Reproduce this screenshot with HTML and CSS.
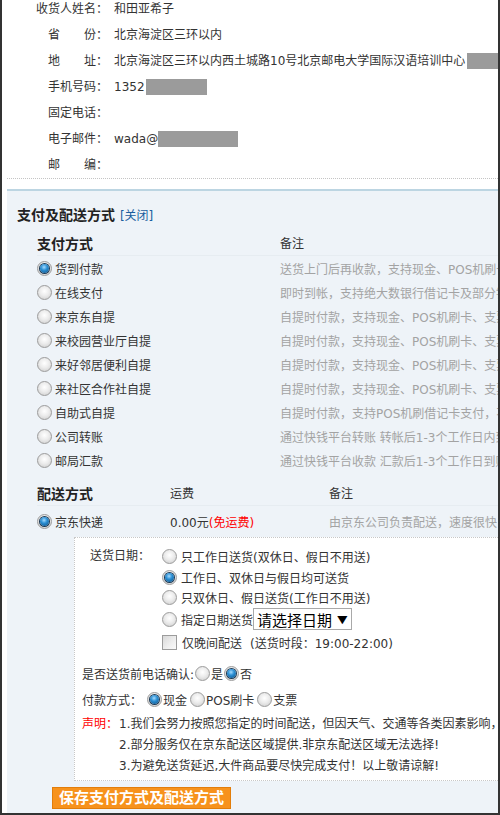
FILE: index.html
```html
<!DOCTYPE html>
<html lang="zh-CN">
<head>
<meta charset="utf-8">
<title>支付及配送方式</title>
<link rel="stylesheet" href="styles.css">
</head>
<body>
<div class="page">
  <div class="info">
    <div class="row"><span class="lbl">收货人姓名：</span><span class="val">和田亚希子</span></div>
    <div class="row"><span class="lbl"><span class="j">省份</span>：</span><span class="val">北京海淀区三环以内</span></div>
    <div class="row"><span class="lbl"><span class="j">地址</span>：</span><span class="val">北京海淀区三环以内西土城路10号北京邮电大学国际汉语培训中心<span class="mask mask-addr"></span></span></div>
    <div class="row"><span class="lbl">手机号码：</span><span class="val">1352<span class="mask mask-phone"></span></span></div>
    <div class="row"><span class="lbl">固定电话：</span><span class="val"></span></div>
    <div class="row"><span class="lbl">电子邮件：</span><span class="val">wada@<span class="mask mask-mail"></span></span></div>
    <div class="row"><span class="lbl"><span class="j">邮编</span>：</span><span class="val"></span></div>
  </div>
  <div class="sep"></div>
  <div class="panel">
    <div class="title">支付及配送方式 <span class="link">[关闭]</span></div>

    <div class="tbl pay">
      <div class="thead"><span class="c1 th">支付方式</span><span class="c2">备注</span></div>
      <div class="tr"><span class="c1"><span class="radio on"></span>货到付款</span><span class="c2 note">送货上门后再收款，支持现金、POS机刷卡、支票支付</span></div>
      <div class="tr"><span class="c1"><span class="radio"></span>在线支付</span><span class="c2 note">即时到帐，支持绝大数银行借记卡及部分银行信用卡</span></div>
      <div class="tr"><span class="c1"><span class="radio"></span>来京东自提</span><span class="c2 note">自提时付款，支持现金、POS机刷卡、支票支付</span></div>
      <div class="tr"><span class="c1"><span class="radio"></span>来校园营业厅自提</span><span class="c2 note">自提时付款，支持现金、POS机刷卡、支票支付</span></div>
      <div class="tr"><span class="c1"><span class="radio"></span>来好邻居便利自提</span><span class="c2 note">自提时付款，支持现金、POS机刷卡、支票支付</span></div>
      <div class="tr"><span class="c1"><span class="radio"></span>来社区合作社自提</span><span class="c2 note">自提时付款，支持现金、POS机刷卡、支票支付</span></div>
      <div class="tr"><span class="c1"><span class="radio"></span>自助式自提</span><span class="c2 note">自提时付款，支持POS机刷借记卡支付，不支持现金</span></div>
      <div class="tr"><span class="c1"><span class="radio"></span>公司转账</span><span class="c2 note">通过快钱平台转账 转帐后1-3个工作日内到账</span></div>
      <div class="tr"><span class="c1"><span class="radio"></span>邮局汇款</span><span class="c2 note">通过快钱平台收款 汇款后1-3个工作日到账</span></div>
    </div>

    <div class="tbl ship">
      <div class="thead"><span class="s1 th">配送方式</span><span class="s2">运费</span><span class="s3">备注</span></div>
      <div class="tr tr-ship"><span class="s1"><span class="radio on"></span>京东快递</span><span class="s2">0.00元<span class="red">(免运费)</span></span><span class="s3 note">由京东公司负责配送，速度很快，还接受上门刷卡付款服务</span></div>
    </div>

    <div class="box">
      <div class="date">
        <span class="date-lbl">送货日期：</span>
        <div class="opts">
          <div class="opt o1"><span class="radio"></span>只工作日送货(双休日、假日不用送)</div>
          <div class="opt o2"><span class="radio on"></span>工作日、双休日与假日均可送货</div>
          <div class="opt o3"><span class="radio"></span>只双休日、假日送货(工作日不用送)</div>
          <div class="opt o4"><span class="radio"></span>指定日期送货<span class="select">请选择日期<span class="arrow">▼</span></span></div>
        </div>
      </div>
      <div class="night"><span class="check"></span>仅晚间配送<span class="night-time">(送货时段：19:00-22:00)</span></div>
      <div class="line confirm">是否送货前电话确认:<span class="radio r-yes"></span>是<span class="radio on r-no"></span>否</div>
      <div class="line paytype">付款方式：<span class="radio on r-cash"></span>现金 <span class="radio r-pos"></span>POS刷卡 <span class="radio r-check"></span>支票</div>
      <div class="notice">
        <span class="notice-lbl">声明：</span>
        <div class="notice-txt">
          <div>1.我们会努力按照您指定的时间配送，但因天气、交通等各类因素影响，您的订单有可能会有延误现象！</div>
          <div>2.部分服务仅在京东配送区域提供.非京东配送区域无法选择!</div>
          <div>3.为避免送货延迟,大件商品要尽快完成支付！以上敬请谅解!</div>
        </div>
      </div>
    </div>

    <div class="btn">保存支付方式及配送方式</div>
  </div>
</div>
</body>
</html>
```

FILE: styles.css
```css
* { box-sizing: border-box; }
html, body { margin: 0; padding: 0; background: #fff; }
body {
  font-family: "DejaVu Sans", "Noto Sans CJK SC", sans-serif;
  font-size: 12px;
  color: #333;
}
.page {
  width: 500px;
  height: 815px;
  border-left: 2px solid #333;
  border-right: 2px solid #333;
  border-bottom: 2px solid #333;
  overflow: hidden;
  display: flex;
  flex-direction: column;
  background: #fff;
}

/* top info */
.info { margin-top: -4px; }
.row { display: flex; height: 26px; line-height: 26px; white-space: nowrap; }
.lbl { width: 106px; flex-shrink: 0; text-align: right; }
.j { display: inline-block; width: 48px; text-align: justify; text-align-last: justify; }
.val { margin-left: 6px; display: flex; align-items: center; }
.mask { display: inline-block; height: 16px; background: #9b9b9b; }
.mask-addr { width: 40px; margin-left: 2px; }
.mask-phone { width: 61px; margin-left: 1px; }
.mask-mail { width: 80px; }

.sep {
  margin-left: 5px;
  height: 11px;
  border-top: 1px dotted #c4c4c4;
}

/* panel */
.panel {
  flex: 1;
  margin-left: 5px;
  border-top: 2px solid #bcd5e2;
  background: #eef3f8;
  padding: 14px 0 0 10px;
  white-space: nowrap;
}
.title { height: 20px; line-height: 20px; font-size: 14px; font-weight: bold; color: #222; }
.link { font-size: 12px; font-weight: normal; color: #1a5e9e; }

.tbl { margin-left: 20px; }
.pay { margin-top: 5px; }
.ship { margin-top: 8px; }
.thead {
  display: flex;
  align-items: center;
  height: 26px;
  border-bottom: 1px solid #e6ecf1;
}
.th { font-size: 14px; font-weight: bold; color: #222; }
.tr { display: flex; align-items: center; height: 24px; }
.tr-ship { height: 31px; }
.c1 { width: 243px; flex-shrink: 0; display: flex; align-items: center; }
.c2 { flex-shrink: 0; }
.s1 { width: 133px; flex-shrink: 0; display: flex; align-items: center; }
.s2 { width: 159px; flex-shrink: 0; }
.s3 { flex-shrink: 0; }
.note { color: #a3a3a3; }
.red { color: #f00; }

/* radio & checkbox */
.radio {
  display: inline-block;
  position: relative;
  width: 15px;
  height: 15px;
  border-radius: 50%;
  border: 1px solid #9c9c9c;
  background: radial-gradient(circle at 50% 40%, #ffffff 0%, #ececec 45%, #c9c9c9 100%);
  flex-shrink: 0;
  vertical-align: middle;
  margin-right: 3px;
}
.radio.on::after {
  content: "";
  position: absolute;
  left: 2px;
  top: 2px;
  width: 9px;
  height: 9px;
  border-radius: 50%;
  background: radial-gradient(circle at 45% 35%, #a6dcff 0%, #2b8fd4 40%, #0b4c80 100%);
  box-shadow: 0 0 0 1px #1d3a55;
}
.check {
  display: inline-block;
  width: 15px;
  height: 15px;
  border: 1px solid #9c9c9c;
  background: linear-gradient(135deg, #d8d8d8 0%, #efefef 60%, #fafafa 100%);
  margin-right: 5px;
  flex-shrink: 0;
}

/* delivery box */
.box {
  margin-left: 57px;
  width: 520px;
  margin-top: 0;
  background: #fff;
  border: 1px dotted #c8c8c8;
  padding: 8px 0 3px 0;
}
.date { display: flex; padding-left: 15px; }
.date-lbl { width: 72px; flex-shrink: 0; line-height: 21px; }
.opt { display: flex; align-items: center; height: 21px; }
.opt .radio { margin-right: 4px; }
.o2 { height: 20px; }
.o4 { height: 22px; }
.select {
  display: inline-flex;
  align-items: center;
  height: 22px;
  width: 99px;
  border: 1px solid #a9a9a9;
  background: #fff;
  font-size: 15px;
  color: #000;
  padding-left: 3px;
}
.arrow { font-size: 11px; margin-left: 6px; transform: scaleX(1.2); }
.night {
  display: flex;
  align-items: center;
  height: 22px;
  margin-top: 1px;
  padding-left: 87px;
}
.night-time { margin-left: 8px; }
.line { display: flex; align-items: center; height: 26px; padding-left: 7px; }
.confirm { margin-top: 7px; }
.confirm .radio { margin: 0 1px 0 1px; }
.paytype .r-cash { margin-left: 5px; margin-right: 1px; }
.paytype .r-pos { margin-left: 3px; margin-right: 1px; }
.paytype .r-check { margin-left: 3px; margin-right: 1px; }
.notice { display: flex; margin-top: 2px; padding-left: 7px; line-height: 21px; }
.notice-lbl { width: 37px; flex-shrink: 0; color: #f00; }

.btn {
  display: inline-block;
  margin: 6px 0 0 35px;
  width: 179px;
  height: 22px;
  line-height: 20px;
  text-align: center;
  background: #f7921c;
  border: 1px solid #e27d0a;
  color: #fff;
  font-size: 15px;
  font-weight: bold;
}
```
